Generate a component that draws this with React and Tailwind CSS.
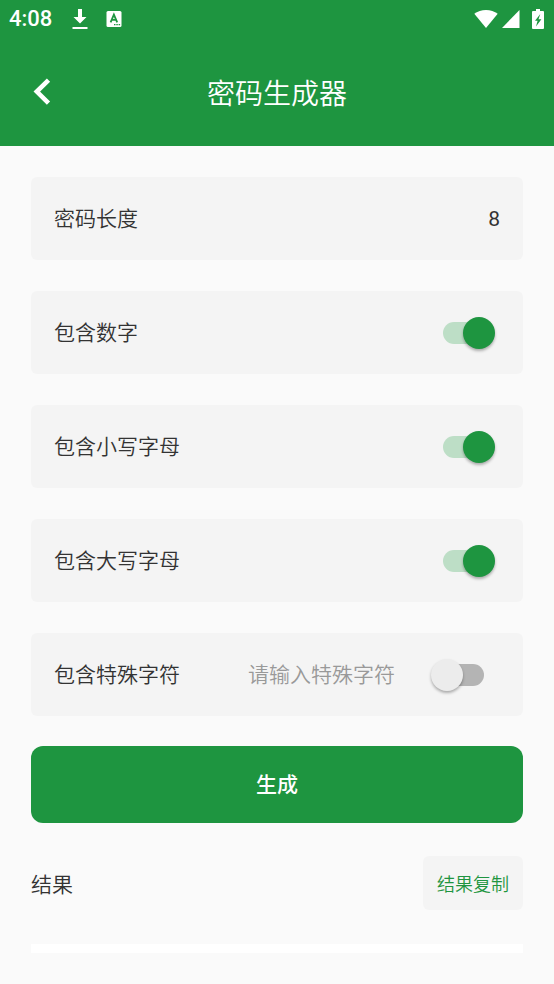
import { useState } from 'react'

const CHARSETS = [
  { id: 'digits', label: '包含数字', chars: '0123456789' },
  { id: 'lower', label: '包含小写字母', chars: 'abcdefghijklmnopqrstuvwxyz' },
  { id: 'upper', label: '包含大写字母', chars: 'ABCDEFGHIJKLMNOPQRSTUVWXYZ' },
]

function StatusBar() {
  return (
    <div className="flex h-[37px] items-center justify-between pl-[9px] pr-[10px] font-[Roboto,sans-serif] text-white">
      <div className="flex items-center">
        <span className="text-[22px] leading-6 font-medium">4:08</span>
        <svg className="ml-5 h-5 w-4" viewBox="0 0 16 20" fill="currentColor" aria-hidden="true">
          <path d="M6 0h4v8h4.5L8 14.5 1.5 8H6z" />
          <path d="M0.5 18h15v2h-15z" />
        </svg>
        <svg className="ml-[18px] h-4 w-4" viewBox="0 0 16 16" aria-hidden="true">
          <rect x="0.5" y="0" width="15" height="16" rx="1.5" fill="#fff" />
          <path d="M4.6 11.3L7.9 3.6l3.3 7.7M5.8 8.8h4.2" fill="none" stroke="#1e9540" strokeWidth="1.8" />
          <path d="M8 13h1.5v1.3H8zM10.3 13h1.5v1.3h-1.5zM12.6 13h1.5v1.3h-1.5z" fill="#1e9540" />
        </svg>
      </div>
      <div className="flex items-center">
        <svg className="h-[18px] w-6" viewBox="0 0 24 18" fill="currentColor" aria-hidden="true">
          <path d="M12 18L0.3 3.8C3.5 1.3 7.5 0 12 0s8.5 1.3 11.7 3.8z" />
        </svg>
        <svg className="ml-1 h-[18px] w-[18px]" viewBox="0 0 18 18" fill="currentColor" aria-hidden="true">
          <path d="M0 18L17.5 0v18z" />
        </svg>
        <svg className="ml-3 h-5 w-3" viewBox="0 0 12 20" aria-hidden="true">
          <path d="M4 0h4v2h3q1 0 1 1v16q0 1-1 1H1q-1 0-1-1V3q0-1 1-1h3z" fill="#fff" />
          <path d="M8.3 5L3 11.8h2.6L4 17.5l5.4-7.2H6.5z" fill="#1e9540" />
        </svg>
      </div>
    </div>
  )
}

function Row({ children }) {
  return (
    <div className="flex h-[83px] items-center justify-between rounded-md bg-[#f4f4f4] px-[23px] font-[Roboto,'Noto_Sans_CJK_SC',sans-serif]">
      {children}
    </div>
  )
}

function Switch({ id, checked, onChange, label }) {
  return (
    <label className="relative mr-[5px] flex h-8 w-16 shrink-0 cursor-pointer items-center">
      <input id={id} type="checkbox" role="switch" aria-label={label} checked={checked}
        onChange={e => onChange(e.target.checked)} className="peer sr-only" />
      <span className="mx-auto h-[22px] w-[41px] rounded-full bg-[#b4b4b4] peer-checked:bg-[#bddec6]" />
      <span className="absolute left-0 h-8 w-8 rounded-full bg-[#ececec] shadow-[0_2px_3px_rgba(0,0,0,0.3)] transition-transform peer-checked:translate-x-8 peer-checked:bg-[#1e9540]" />
    </label>
  )
}

export default function App() {
  const [length, setLength] = useState('8')
  const [enabled, setEnabled] = useState({ digits: true, lower: true, upper: true, special: false })
  const [special, setSpecial] = useState('')
  const [result, setResult] = useState('')

  const toggle = (id, value) => setEnabled(prev => ({ ...prev, [id]: value }))

  const generate = () => {
    let pool = CHARSETS.filter(c => enabled[c.id]).map(c => c.chars).join('')
    if (enabled.special) pool += special
    if (!pool) return
    const count = Math.min(Number(length) || 0, 128)
    setResult(Array.from({ length: count }, () => pool[Math.floor(Math.random() * pool.length)]).join(''))
  }

  return (
    <div className="min-h-screen bg-[#fafafa] font-['Noto_Sans_CJK_SC',sans-serif] text-[21px] leading-8 font-[350] text-[#333333]">
      <header className="bg-[#1e9540] text-white">
        <StatusBar />
        <div className="grid h-[109px] grid-cols-[1fr_auto_1fr] items-center px-[31px]">
          <button type="button" aria-label="返回" className="flex h-10 w-10 items-center">
            <svg className="h-7 w-5" viewBox="0 0 20 28" fill="none" stroke="currentColor" strokeWidth="4.6" aria-hidden="true">
              <path d="M17.5 2.1L5.8 13.6 17.5 25.1" />
            </svg>
          </button>
          <h1 className="text-[28px] leading-10 font-[350]">密码生成器</h1>
        </div>
      </header>

      <main className="px-[31px] pt-[31px]">
        <div className="flex flex-col gap-[31px]">
          <Row>
            <label htmlFor="length">密码长度</label>
            <input id="length" type="text" inputMode="numeric" value={length}
              onChange={e => setLength(e.target.value)}
              className="w-24 bg-transparent text-right font-normal outline-none" />
          </Row>

          {CHARSETS.map(c => (
            <Row key={c.id}>
              <label htmlFor={c.id}>{c.label}</label>
              <Switch id={c.id} label={c.label} checked={enabled[c.id]} onChange={v => toggle(c.id, v)} />
            </Row>
          ))}

          <Row>
            <label htmlFor="special" className="shrink-0">包含特殊字符</label>
            <input type="text" aria-label="特殊字符" value={special} placeholder="请输入特殊字符"
              onChange={e => setSpecial(e.target.value)}
              className="mr-9 ml-4 min-w-0 flex-1 bg-transparent text-right outline-none placeholder:text-[#999999]" />
            <Switch id="special" label="包含特殊字符" checked={enabled.special} onChange={v => toggle('special', v)} />
          </Row>
        </div>

        <button type="button" onClick={generate}
          className="mt-[30px] h-[77px] w-full rounded-xl bg-[#1e9540] font-[Roboto,'Noto_Sans_CJK_SC',sans-serif] font-medium text-white">
          生成
        </button>

        <div className="mt-[33px] flex items-center justify-between">
          <h2 className="font-[350]">结果</h2>
          <button type="button" onClick={() => navigator.clipboard?.writeText(result)}
            className="h-[54px] rounded-md bg-[#f4f4f4] px-[14px] text-[18px] text-[#1e9540]">
            结果复制
          </button>
        </div>

        <output className="mt-[34px] block bg-white px-2 pt-[9px] break-all">{result}</output>
      </main>
    </div>
  )
}
